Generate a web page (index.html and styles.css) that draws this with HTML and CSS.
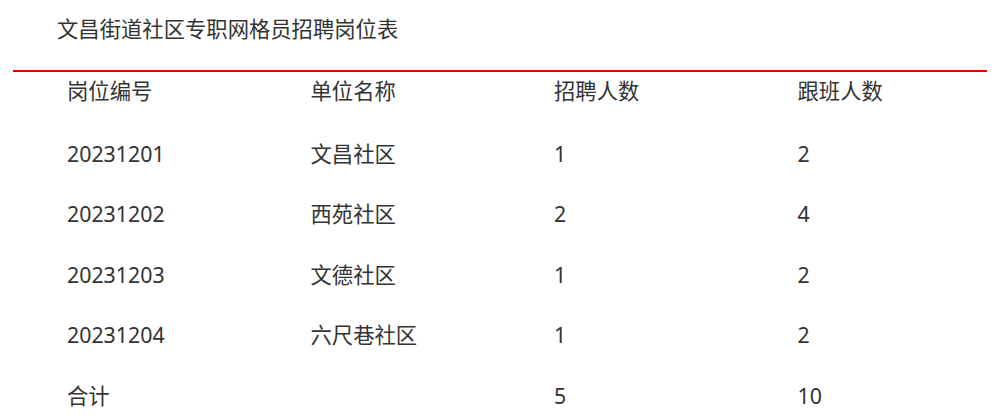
FILE: index.html
```html
<!DOCTYPE html>
<html lang="zh-CN">
<head>
<meta charset="utf-8">
<title>文昌街道社区专职网格员招聘岗位表</title>
<link rel="stylesheet" href="styles.css">
</head>
<body>
<div class="page">
  <h1 class="title">文昌街道社区专职网格员招聘岗位表</h1>
  <table class="jobs">
    <thead>
      <tr><th>岗位编号</th><th>单位名称</th><th>招聘人数</th><th>跟班人数</th></tr>
    </thead>
    <tbody>
      <tr><td>20231201</td><td>文昌社区</td><td>1</td><td>2</td></tr>
      <tr><td>20231202</td><td>西苑社区</td><td>2</td><td>4</td></tr>
      <tr><td>20231203</td><td>文德社区</td><td>1</td><td>2</td></tr>
      <tr><td>20231204</td><td>六尺巷社区</td><td>1</td><td>2</td></tr>
      <tr><td>合计</td><td></td><td>5</td><td>10</td></tr>
    </tbody>
  </table>
</div>
</body>
</html>
```

FILE: styles.css
```css
html, body {
  margin: 0;
  padding: 0;
  background: #fff;
}
body {
  font-family: "Noto Sans", "Noto Sans CJK SC", sans-serif;
  color: #333;
  font-size: 21.33px;
}
.page {
  padding: 0 14px 0 13px;
}
.title {
  margin: 0;
  font-size: 21.33px;
  font-weight: normal;
  line-height: 30px;
  padding: 13.5px 0 26.5px 44px;
  border-bottom: 2px solid #e60000;
}
.jobs {
  width: 100%;
  border-collapse: collapse;
  table-layout: fixed;
}
.jobs th,
.jobs td {
  text-align: left;
  font-weight: normal;
  padding: 15px 0 15px 54px;
  line-height: 30.5px;
  height: 30.5px;
}
.jobs th {
  padding-top: 3.5px;
  padding-bottom: 17.5px;
}
```
